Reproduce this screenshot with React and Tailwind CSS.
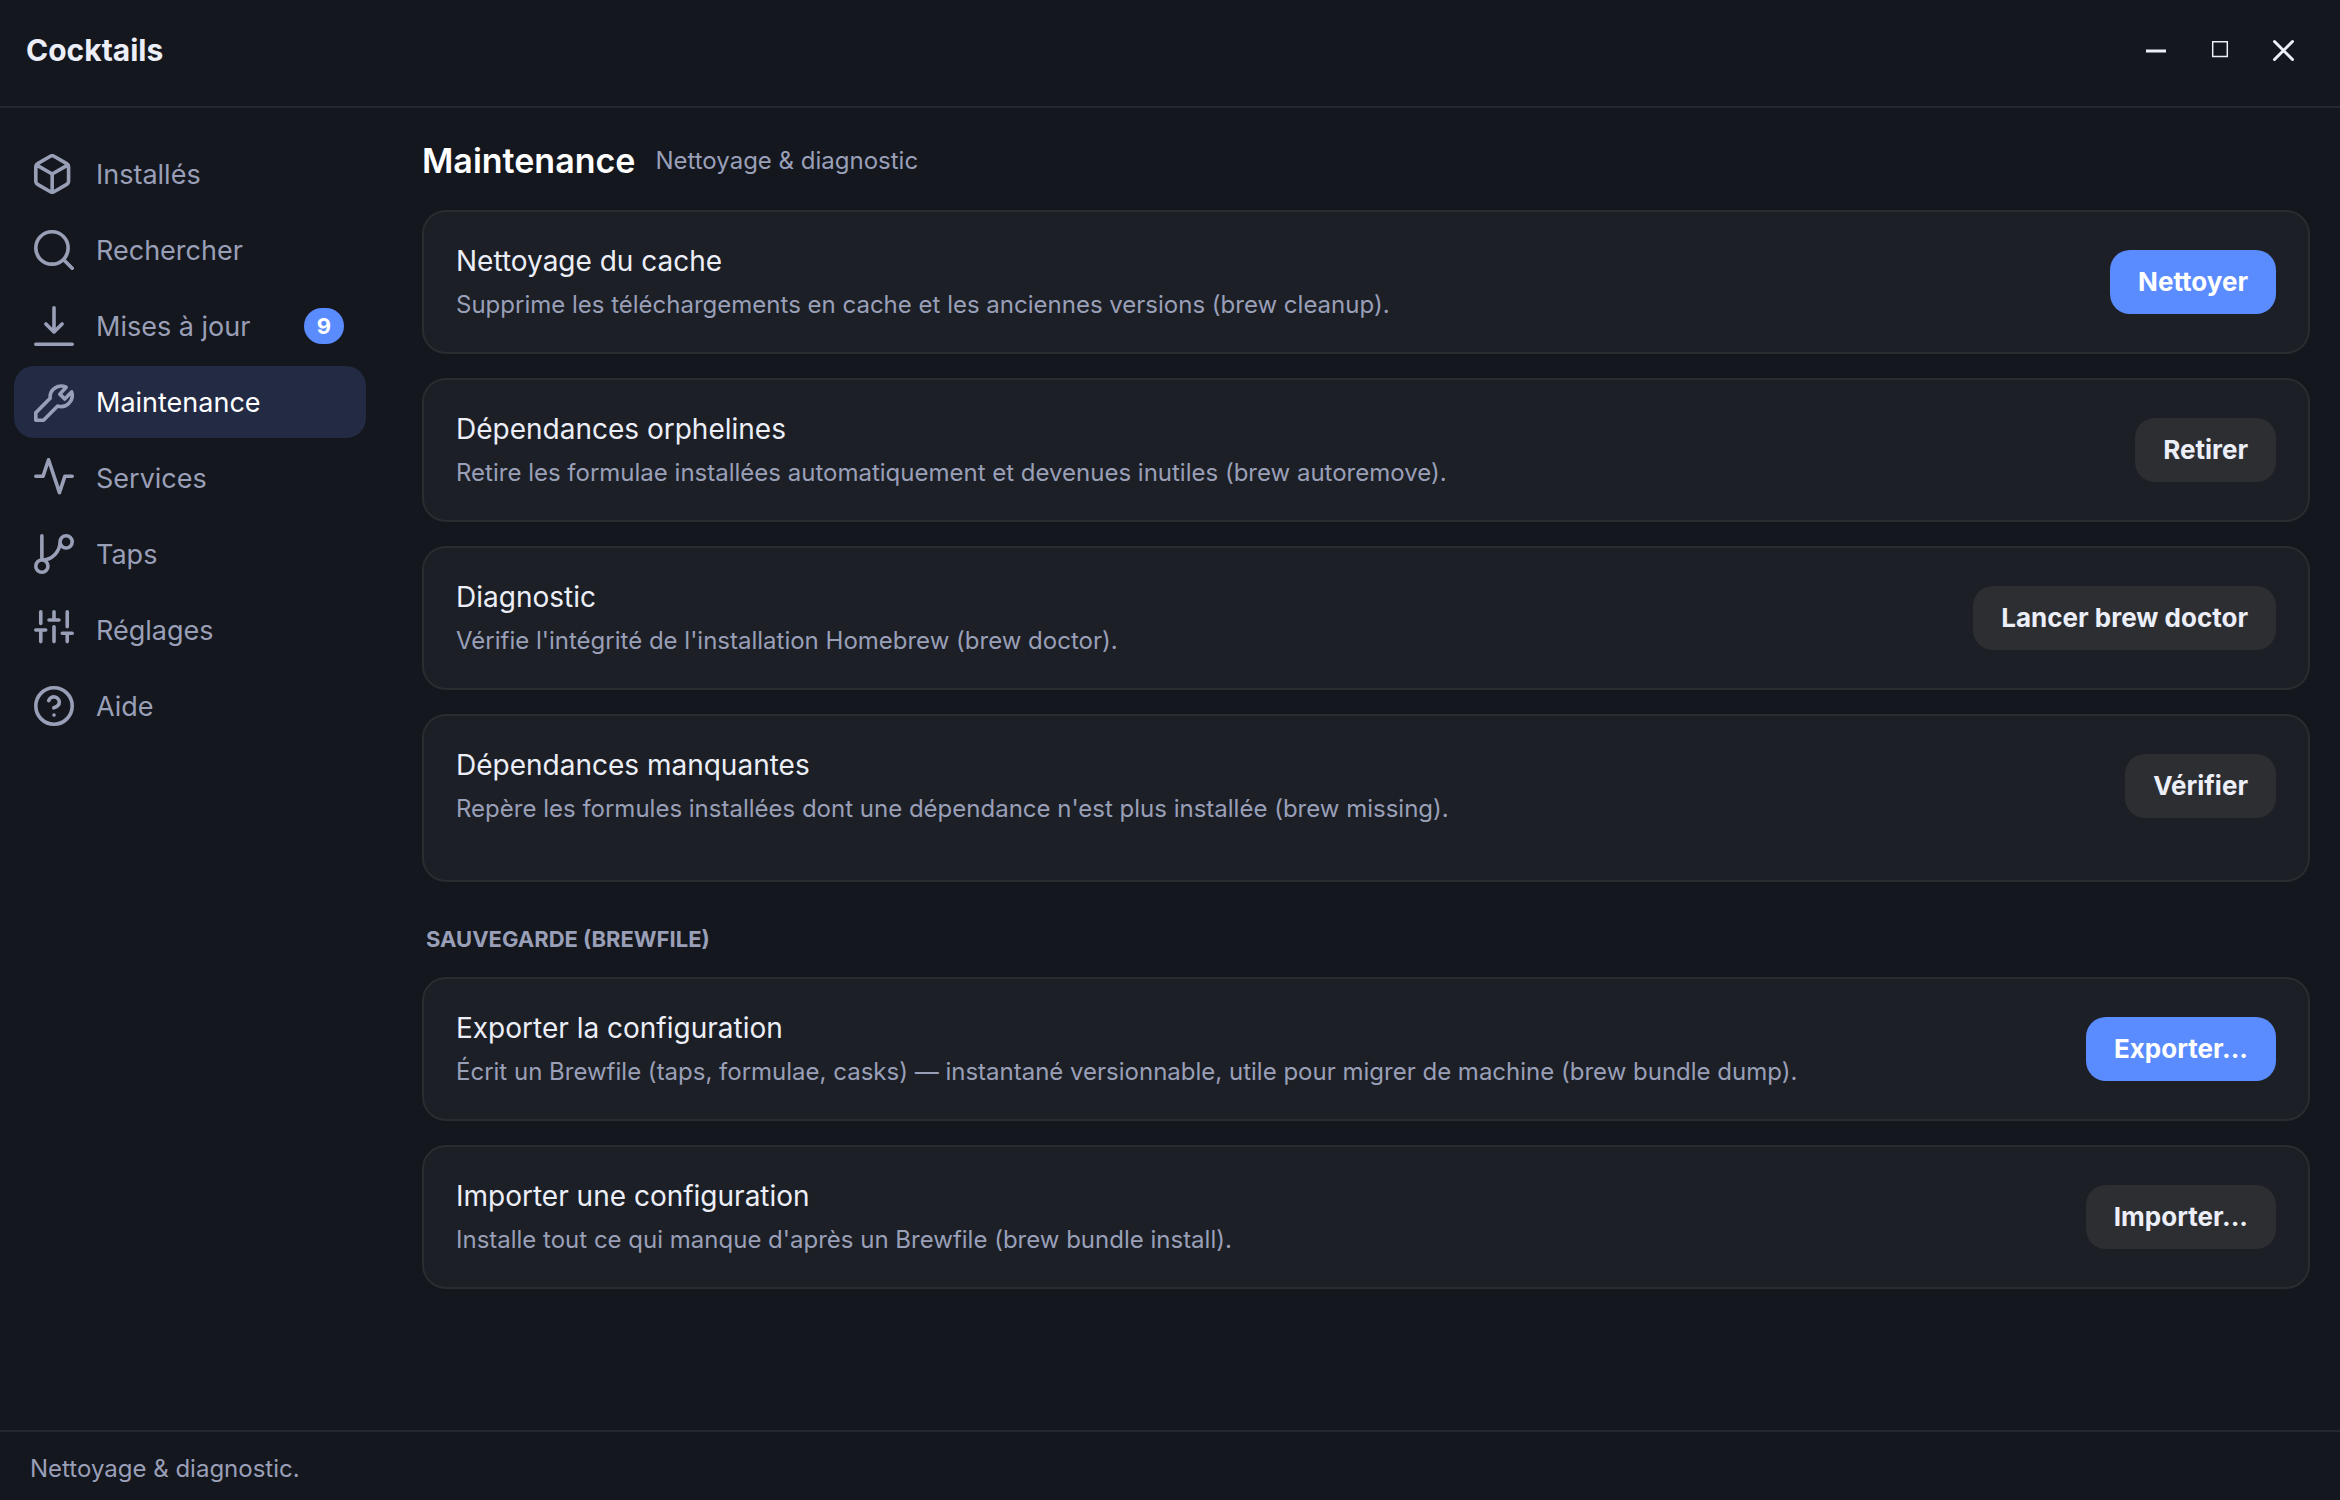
import { useState } from 'react';

// box: left, top and longest side of each drawing, used to fit it in the 40px slot
const ICONS = {
  box: {
    box: [3, 2, 20],
    d: 'M21 16V8a2 2 0 0 0-1-1.73l-7-4a2 2 0 0 0-2 0l-7 4A2 2 0 0 0 3 8v8a2 2 0 0 0 1 1.73l7 4a2 2 0 0 0 2 0l7-4A2 2 0 0 0 21 16zM3.27 6.96 12 12.01l8.73-5.05M12 22V12',
  },
  search: { box: [3, 3, 18], d: 'M19 11a8 8 0 1 1-16 0 8 8 0 0 1 16 0zM21 21l-4.35-4.35' },
  download: { box: [3, 3, 18], d: 'M12 3v12M8 11l4 4 4-4M3 21h18' },
  wrench: {
    box: [3, 3, 18],
    d: 'M3 17.3V21h3.8l7-7a5.5 5.5 0 0 0 6.9-7l-3.4 3.5-2.4-2.4 3.1-3.4a5.5 5.5 0 0 0-7.9 5.4z',
  },
  activity: { box: [2, 3, 20], d: 'M22 12h-4l-3 9L9 3l-3 9H2' },
  branch: {
    box: [3, 3, 18],
    d: 'M6 3v12M21 6a3 3 0 1 1-6 0 3 3 0 0 1 6 0zM9 18a3 3 0 1 1-6 0 3 3 0 0 1 6 0zM15 6a9 9 0 0 1-9 9',
  },
  sliders: {
    box: [1, 3, 22],
    d: 'M4 21v-7M4 10V3M12 21v-9M12 8V3M20 21v-5M20 12V3M1 14h6M9 8h6M17 16h6',
  },
  help: {
    box: [2, 2, 20],
    d: 'M22 12a10 10 0 1 1-20 0 10 10 0 0 1 20 0zM9.09 9a3 3 0 0 1 5.83 1c0 2-3 3-3 3M12 17h.01',
  },
};

function Icon({ name }) {
  const { box: [x, y, size], d } = ICONS[name];
  return (
    <svg className="size-10 shrink-0 text-[#9a9fb8]" viewBox="0 0 40 40" fill="none" aria-hidden="true">
      <path
        d={d}
        transform={`translate(1.8 1.8) scale(${36.4 / size}) translate(${-x} ${-y})`}
        stroke="currentColor"
        strokeWidth="3.6"
        strokeLinecap="round"
        strokeLinejoin="round"
        vectorEffect="non-scaling-stroke"
      />
    </svg>
  );
}

const navItems = [
  { id: 'installed',   label: 'Installés',   icon: 'box' },
  { id: 'search',      label: 'Rechercher',  icon: 'search' },
  { id: 'updates',     label: 'Mises à jour', icon: 'download', badge: 9 },
  { id: 'maintenance', label: 'Maintenance', icon: 'wrench' },
  { id: 'services',    label: 'Services',    icon: 'activity' },
  { id: 'taps',        label: 'Taps',        icon: 'branch' },
  { id: 'settings',    label: 'Réglages',    icon: 'sliders' },
  { id: 'help',        label: 'Aide',        icon: 'help' },
];

const maintenance = [
  {
    title: 'Nettoyage du cache',
    text: 'Supprime les téléchargements en cache et les anciennes versions (brew cleanup).',
    action: 'Nettoyer',
    primary: true,
  },
  {
    title: 'Dépendances orphelines',
    text: 'Retire les formulae installées automatiquement et devenues inutiles (brew autoremove).',
    action: 'Retirer',
  },
  {
    title: 'Diagnostic',
    text: "Vérifie l'intégrité de l'installation Homebrew (brew doctor).",
    action: 'Lancer brew doctor',
  },
  {
    title: 'Dépendances manquantes',
    text: "Repère les formules installées dont une dépendance n'est plus installée (brew missing).",
    action: 'Vérifier',
    results: true,
  },
];

const backup = [
  {
    title: 'Exporter la configuration',
    text: 'Écrit un Brewfile (taps, formulae, casks) — instantané versionnable, utile pour migrer de machine (brew bundle dump).',
    action: 'Exporter...',
    primary: true,
  },
  {
    title: 'Importer une configuration',
    text: "Installe tout ce qui manque d'après un Brewfile (brew bundle install).",
    action: 'Importer...',
  },
];

function ActionCard({ title, text, action, primary, results }) {
  return (
    <article className="rounded-3xl border-2 border-[#2a2c30] bg-[#1c1f26] p-8">
      <div className="flex items-center justify-between gap-8">
        <div className="flex flex-col gap-3">
          <h3 className="text-[28px] leading-[34px] text-[#eceef8]">{title}</h3>
          <p className="text-2xl leading-[30px] text-[#9a9fb8]">{text}</p>
        </div>
        <button
          type="button"
          className={`h-16 shrink-0 rounded-[20px] px-7 pb-0.5 text-[26px] font-[650] ${
            primary ? 'bg-[#5b8cff] text-white' : 'bg-[#2d2e32] text-[#eceef8]'
          }`}
        >
          {action}
        </button>
      </div>
      {results && <div className="mt-6" />}
    </article>
  );
}

export default function App() {
  const [page, setPage] = useState('maintenance');

  return (
    <div className="flex min-h-screen flex-col bg-[#14171e] font-['Inter',sans-serif]">
      <header className="flex h-[108px] items-center justify-between border-b-2 border-[#26282f] pr-6 pb-1.5 pl-[26px]">
        <h1 className="text-[30px] leading-9 font-[650] text-[#eceef8]">Cocktails</h1>
        <div className="flex text-[#eceef8]">
          <button type="button" aria-label="Réduire" className="flex size-16 items-center justify-center">
            <svg width="24" height="24" viewBox="0 0 24 24" fill="none" stroke="currentColor">
              <path d="M2 13h20" strokeWidth="3" />
            </svg>
          </button>
          <button type="button" aria-label="Agrandir" className="flex size-16 items-center justify-center">
            <svg width="24" height="24" viewBox="0 0 24 24" fill="none" stroke="currentColor">
              <path d="M4.7 3.7h14.6v14.9H4.7z" strokeWidth="1.5" />
            </svg>
          </button>
          <button type="button" aria-label="Fermer" className="flex size-16 items-center justify-center">
            <svg width="24" height="24" viewBox="0 0 24 24" fill="none" stroke="currentColor">
              <path d="M2.5 3.5l18 18M20.5 3.5l-18 18" strokeWidth="3" strokeLinecap="round" />
            </svg>
          </button>
        </div>
      </header>

      <div className="flex grow">
        <nav className="flex w-[380px] shrink-0 flex-col gap-1 px-3.5 pt-[30px]">
          {navItems.map(item => (
            <button
              key={item.id}
              type="button"
              onClick={() => setPage(item.id)}
              aria-current={page === item.id ? 'page' : undefined}
              className={`flex h-[72px] items-center gap-[22px] rounded-[20px] pr-[22px] pl-5 text-[27px] ${
                page === item.id ? 'bg-[#222a44] text-white' : 'text-[#9a9fb8]'
              }`}
            >
              <Icon name={item.icon} />
              <span className="pt-0.5">{item.label}</span>
              {item.badge && (
                <span className="ml-auto flex h-9 w-10 items-center justify-center rounded-full bg-[#5b8cff] text-[22px] font-[650] text-white">
                  {item.badge}
                </span>
              )}
            </button>
          ))}
        </nav>

        <main className="flex grow flex-col pt-8 pr-[30px] pl-[42px]">
          <div className="flex items-center gap-5">
            <h2 className="text-[34px] leading-[42px] font-semibold text-white">Maintenance</h2>
            <p className="text-2xl leading-[30px] text-[#9a9fb8]">Nettoyage &amp; diagnostic</p>
          </div>
          <section className="mt-7 flex flex-col gap-6">
            {maintenance.map(card => <ActionCard key={card.title} {...card} />)}
          </section>
          <section className="mt-11">
            <h3 className="px-1 text-[22px] leading-[27px] font-[650] text-[#9a9fb8] uppercase">Sauvegarde (Brewfile)</h3>
            <div className="mt-6 flex flex-col gap-6">
              {backup.map(card => <ActionCard key={card.title} {...card} />)}
            </div>
          </section>
        </main>
      </div>

      <footer className="border-t-2 border-[#26282f] px-[30px] pt-[22px] pb-4">
        <p className="text-2xl leading-[30px] text-[#9a9fb8]">Nettoyage &amp; diagnostic.</p>
      </footer>
    </div>
  );
}
